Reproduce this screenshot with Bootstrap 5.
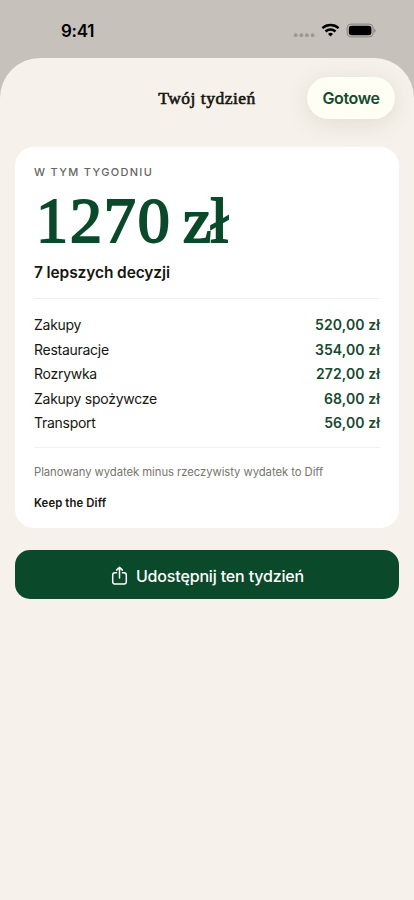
<!DOCTYPE html>
<html lang="pl">
<head>
<meta charset="utf-8">
<meta name="viewport" content="width=device-width, initial-scale=1">
<title>Twój tydzień</title>
<link rel="stylesheet" href="https://cdn.jsdelivr.net/npm/bootstrap@5.3.0/dist/css/bootstrap.min.css">
<style>
body{font-family:Inter,sans-serif;background:#c6c1bb;color:#15160f;width:414px;height:900px;overflow:hidden}
.status-bar{height:58px;padding:4px 38px 0 61px;color:#000}
.clock{font-size:17px;font-weight:600;letter-spacing:-.25px;line-height:20px}
.sheet{background:#f6f1ea;border-radius:40px 40px 0 0;height:842px;padding:0 15px;overflow:hidden}
.sheet-head{display:grid;grid-template-columns:1fr auto 1fr;height:89px;padding:19px 4px 0 4px}
.sheet-title{font-family:"Liberation Serif",serif;font-weight:400;font-size:17.5px;line-height:43px;letter-spacing:.5px;-webkit-text-stroke:.6px #15160f;margin:0}
.done{background:#fffef2;color:#17492f;border:0;border-radius:21px;width:88px;height:42px;padding:0;font-size:16px;font-weight:600;letter-spacing:-.4px;box-shadow:0 4px 24px rgba(80,70,40,.12)}
.summary{border:0;border-radius:19px;height:381px;padding:19px 19px 0}
.eyebrow{font-size:11px;font-weight:500;line-height:13px;letter-spacing:1.32px;color:#68665f}
.total{font-family:"Liberation Serif",serif;font-weight:400;font-size:64px;line-height:72px;color:#0b492b;margin-top:5.5px;padding-left:2px;letter-spacing:1.9px;word-spacing:-6.5px;-webkit-text-stroke:2px #0b492b}
.currency{letter-spacing:-1px}
.decisions{font-size:15.5px;font-weight:600;line-height:20px;letter-spacing:-.11px;margin-top:6.5px}
.rule{height:1px;background:#efefee}
.rule-first{margin-top:15px}
.rows{margin-top:14px;font-size:14px;line-height:24.5px}
.item{letter-spacing:-.27px}
.amount{font-weight:600;color:#17492f;letter-spacing:.1px}
.rule-last{margin-top:11.5px}
.note{font-size:11.3px;line-height:14px;color:#77756d;margin-top:17px;letter-spacing:-.06px}
.brand{font-size:11.3px;font-weight:600;line-height:14px;margin-top:16.5px;letter-spacing:.12px}
.share{background:#0b492b;color:#fff;border:0;border-radius:15px;height:49px;margin-top:22px;font-size:16px;font-weight:500;letter-spacing:-.16px;padding:2px 0 0 1px}
</style>
<script src="https://cdn.jsdelivr.net/npm/bootstrap@5.3.0/dist/js/bootstrap.bundle.min.js"></script>
</head>
<body>
<header class="status-bar d-flex align-items-center justify-content-between">
<span class="clock">9:41</span>
<svg width="84" height="16" viewBox="0 -.5 84 16">
<g fill="#9b9792"><circle cx="3.7" cy="11.7" r="1.9"/><circle cx="9.3" cy="11.7" r="1.9"/><circle cx="14.9" cy="11.7" r="1.9"/><circle cx="20.6" cy="11.7" r="1.9"/></g>
<g fill="none" stroke="#000" stroke-width="2.4"><path d="M30.4 4.7a12 12 0 0 1 16.2 0"/><path d="M33.5 8a7.4 7.4 0 0 1 10 0"/></g>
<path d="M38.5 12.9l-2.5-2.5a3.9 3.9 0 0 1 5 0z"/>
<rect x="55.1" y=".6" width="26" height="12.8" rx="4" fill="none" stroke="#86827e"/><rect x="56.8" y="2.3" width="22.6" height="9.4" rx="2.7"/><path d="M82.2 5c1.7.5 1.7 3.7 0 4.2z" fill="#86827e"/>
</svg>
</header>
<main class="sheet">
<div class="sheet-head">
<span></span><h1 class="sheet-title">Twój tydzień</h1><button class="done btn ms-auto">Gotowe</button>
</div>
<section class="summary card">
<div class="eyebrow">W TYM TYGODNIU</div>
<div class="total">1270 <span class="currency">zł</span></div>
<div class="decisions">7 lepszych decyzji</div>
<div class="rule rule-first"></div>
<div class="rows">
<div class="d-flex justify-content-between"><span class="item">Zakupy</span><span class="amount">520,00 zł</span></div>
<div class="d-flex justify-content-between"><span class="item">Restauracje</span><span class="amount">354,00 zł</span></div>
<div class="d-flex justify-content-between"><span class="item">Rozrywka</span><span class="amount">272,00 zł</span></div>
<div class="d-flex justify-content-between"><span class="item">Zakupy spożywcze</span><span class="amount">68,00 zł</span></div>
<div class="d-flex justify-content-between"><span class="item">Transport</span><span class="amount">56,00 zł</span></div>
</div>
<div class="rule rule-last"></div>
<div class="note">Planowany wydatek minus rzeczywisty wydatek to Diff</div>
<div class="brand">Keep the Diff</div>
</section>
<button class="share btn w-100 d-flex align-items-center justify-content-center gap-2">
<svg width="17" height="20" viewBox="0 0 17 20" fill="none" stroke="#fff" stroke-width="1.5" stroke-linecap="round" stroke-linejoin="round"><path d="M5.5 6.7H4A2.3 2.3 0 0 0 1.7 9v6.7A2.3 2.3 0 0 0 4 18h9a2.3 2.3 0 0 0 2.3-2.3V9A2.3 2.3 0 0 0 13 6.7h-1.5M8.5 12V1.5M5.6 4.1l2.9-2.8 2.9 2.8"/></svg>
<span>Udostępnij ten tydzień</span>
</button>
</main>
</body>
</html>
